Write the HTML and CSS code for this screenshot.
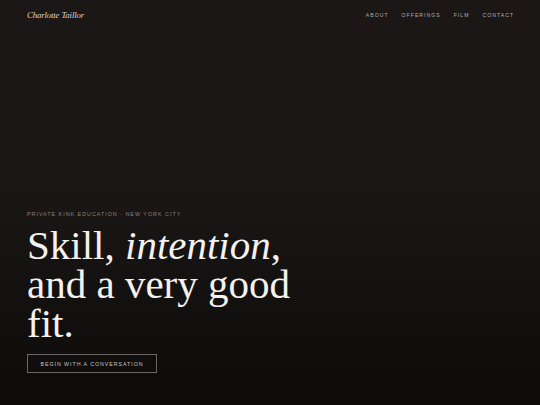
FILE: index.html
```html
<!DOCTYPE html>
<html lang="en">
<head>
<meta charset="utf-8">
<title>Charlotte Taillor</title>
<link rel="stylesheet" href="styles.css">
</head>
<body>
<div class="page">
  <header class="topbar">
    <a class="logo" href="#">Charlotte Taillor</a>
    <nav class="nav">
      <a href="#">About</a>
      <a href="#">Offerings</a>
      <a href="#">Film</a>
      <a href="#">Contact</a>
    </nav>
  </header>
  <main class="hero">
    <p class="eyebrow">Private Kink Education · New York City</p>
    <h1 class="title">Skill, <em>intention</em>,<br>and a very good<br>fit.</h1>
    <a class="cta" href="#">Begin with a conversation</a>
  </main>
</div>
</body>
</html>
```
FILE: styles.css
```css
html, body {
  margin: 0;
  padding: 0;
}
body {
  background: #0b0a09;
  font-family: "Liberation Sans", Arial, sans-serif;
  color: #f2eeea;
}
.page {
  width: 540px;
  height: 405px;
  display: flex;
  flex-direction: column;
  background: linear-gradient(180deg, #1b1716 0%, #1a1716 45%, #141211 70%, #0c0b0a 100%);
  overflow: hidden;
}
.topbar {
  display: flex;
  justify-content: space-between;
  align-items: center;
  padding: 0 27px;
  height: 29px;
}
.logo {
  font-family: "Liberation Serif", "Times New Roman", serif;
  font-style: italic;
  font-size: 8.8px;
  letter-spacing: -0.15px;
  color: #d9d6d3;
  text-decoration: none;
}
.nav {
  display: flex;
  gap: 14px;
}
.nav a {
  font-size: 5.1px;
  letter-spacing: 1.05px;
  text-transform: uppercase;
  color: #b5b0ab;
  text-decoration: none;
  margin-right: -1.05px;
}
.hero {
  flex: 1;
  display: flex;
  flex-direction: column;
  justify-content: flex-end;
  align-items: flex-start;
  padding: 0 27px 32px;
}
.eyebrow {
  margin: 0 0 9px;
  font-size: 5.4px;
  letter-spacing: 0.98px;
  text-transform: uppercase;
  color: #8d817d;
}
.title {
  margin: 0 0 11px;
  font-family: "Liberation Serif", "Times New Roman", serif;
  font-weight: 400;
  font-size: 41px;
  line-height: 39px;
  color: #f4f1ee;
}
.title em {
  font-style: italic;
}
.cta {
  display: inline-flex;
  align-items: center;
  justify-content: center;
  width: 130px;
  height: 19px;
  box-sizing: border-box;
  border: 1px solid #6b6765;
  font-size: 5.3px;
  letter-spacing: 0.95px;
  text-transform: uppercase;
  color: #c9c5c1;
  text-decoration: none;
}
```
